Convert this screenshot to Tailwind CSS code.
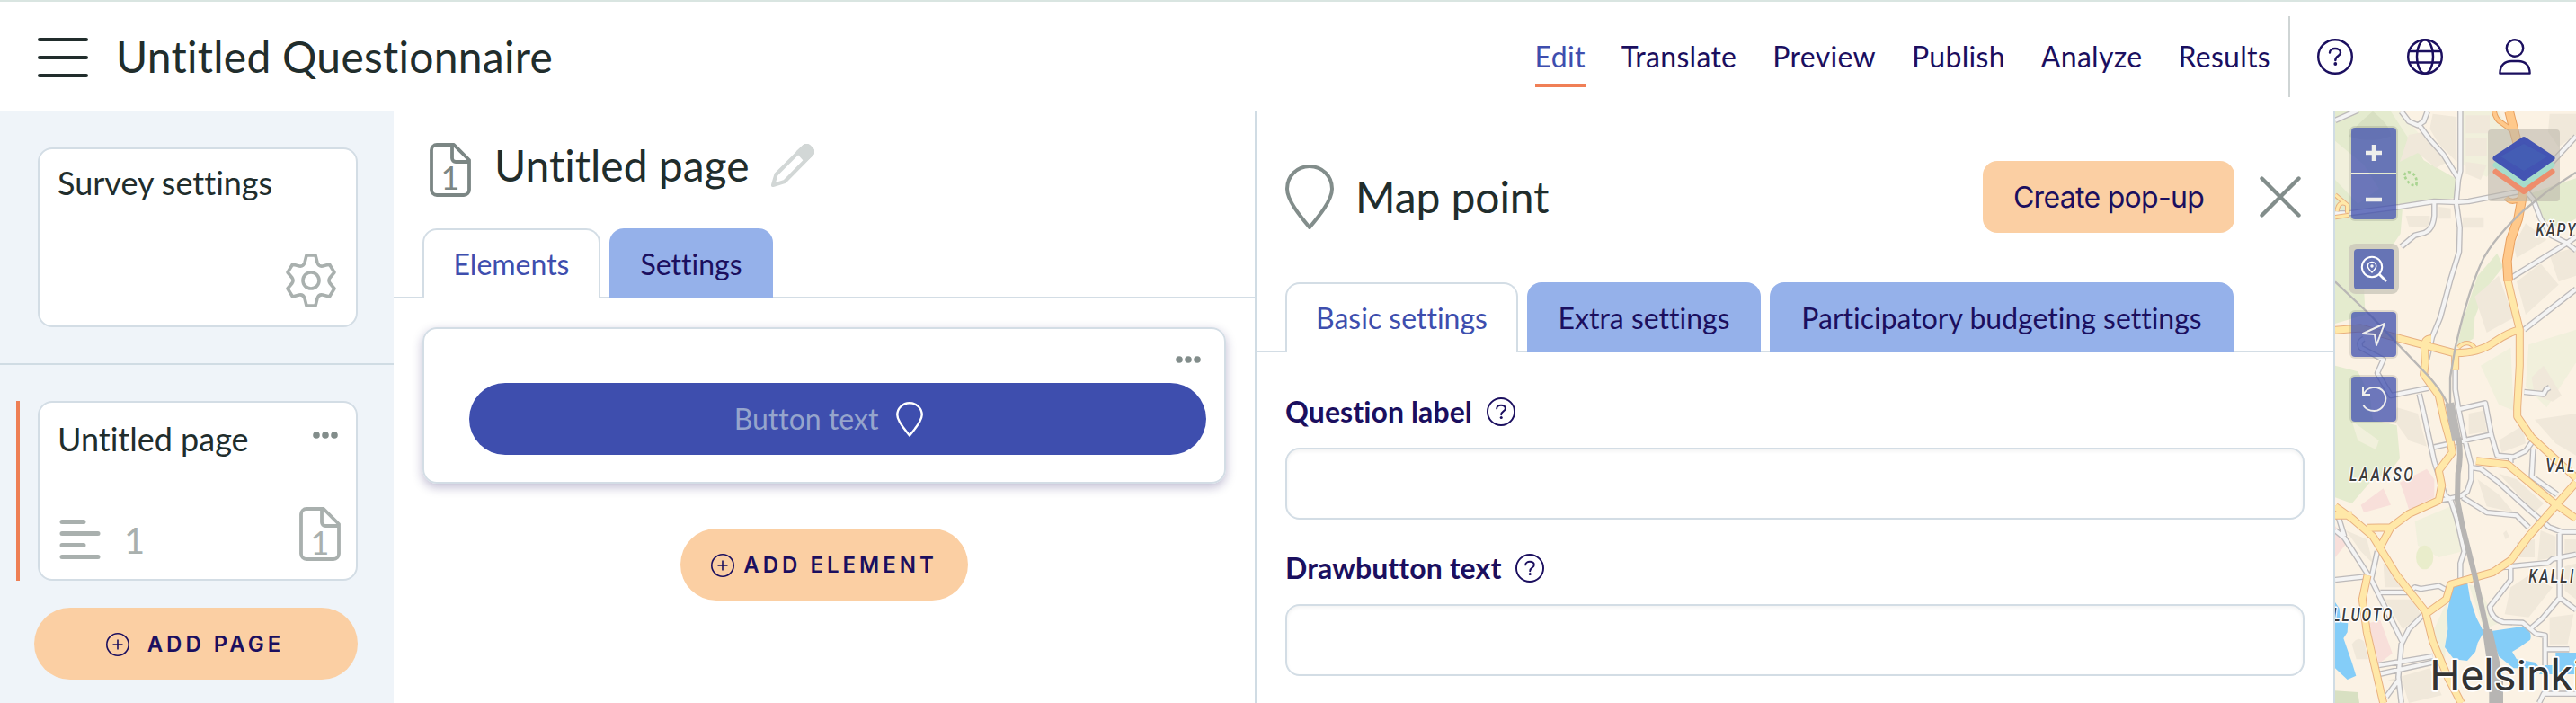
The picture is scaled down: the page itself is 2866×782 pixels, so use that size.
<!DOCTYPE html>
<html lang="en">
  <head>
    <meta charset="UTF-8" />
    <meta name="viewport" content="width=device-width, initial-scale=1.0" />
    <title>Untitled Questionnaire</title>
    <script src="https://cdn.jsdelivr.net/npm/@tailwindcss/browser@4"></script>
  </head>
  <body class="h-[782px] flex flex-col overflow-hidden bg-white font-[Lato,sans-serif] [font-variant-ligatures:none] text-[32px] leading-10 text-[#1b0f5f]">

    <!-- shared icons -->
    <svg class="hidden">
      <symbol id="file" viewBox="0 0 46 60">
        <path d="M8 2H27L44 19V52a6 6 0 0 1-6 6H8a6 6 0 0 1-6-6V8a6 6 0 0 1 6-6ZM25 2V17a4 4 0 0 0 4 4H44" fill="none" stroke="currentColor" stroke-width="3.8" stroke-linejoin="round"/>
      </symbol>
      <symbol id="pin" viewBox="0 0 54 72">
        <path d="M27 2C13 2 2 13 2 27C2 40 17 58 27 70C37 58 52 40 52 27C52 13 41 2 27 2Z" fill="none" stroke="currentColor" stroke-width="4" stroke-linejoin="round"/>
      </symbol>
      <symbol id="help" viewBox="0 0 40 40">
        <circle cx="20" cy="20" r="18.8" fill="none" stroke="currentColor" stroke-width="2.4"/>
        <path d="M14 15.5C14 9.5 26 9.5 26 15.5C26 19.5 20.3 19 20.3 24" fill="none" stroke="currentColor" stroke-width="2.4" stroke-linecap="round"/>
        <circle cx="20.3" cy="28" r="1.9" fill="currentColor"/>
      </symbol>
      <symbol id="plus" viewBox="0 0 26 26">
        <path d="M13 7.5V18.5M7.5 13H18.5" stroke="currentColor" stroke-width="1.6"/>
        <circle cx="13" cy="13" r="12.2" fill="none" stroke="currentColor" stroke-width="1.6"/>
      </symbol>
      <symbol id="dots" viewBox="0 0 28 8">
        <circle cx="4" cy="4" r="3.8" fill="currentColor"/><circle cx="14" cy="4" r="3.8" fill="currentColor"/><circle cx="24" cy="4" r="3.8" fill="currentColor"/>
      </symbol>
    </svg>

    <header class="h-[124px] shrink-0 flex items-center border-t-2 border-[#d9e5e1] pl-[42px]">
      <svg class="w-14 h-10 mt-0.5 overflow-visible" viewBox="0 0 56 40"><path d="M2 0H54M2 20H54M2 40H54" stroke="#212d2c" stroke-width="4" stroke-linecap="round"/></svg>
      <h1 class="ml-[31px] text-5xl tracking-[0.25px] text-[#212d2c]">Untitled Questionnaire</h1>
      <nav class="ml-auto flex h-full items-center gap-10 tracking-[0.3px]">
        <a class="relative text-[#3e4eae]">Edit<span class="absolute left-0 -bottom-3.5 w-full h-1 bg-[#f07f56]"></span></a>
        <a>Translate</a>
        <a>Preview</a>
        <a>Publish</a>
        <a>Analyze</a>
        <a>Results</a>
      </nav>
      <div class="ml-5 w-0.5 h-[90px] bg-[#cfd5d5]"></div>
      <div class="flex items-center pl-[30px] pr-[50px] gap-[60px]">
        <svg class="size-10"><use href="#help"/></svg>
        <svg class="size-10" viewBox="0 0 40 40" fill="none" stroke="currentColor" stroke-width="2.4"><circle cx="20" cy="20" r="18.8"/><ellipse cx="20" cy="20" rx="9" ry="18.8"/><path d="M2.5 14H37.5M2.5 26.5H37.5"/></svg>
        <svg class="w-9 h-10 ml-0.5" viewBox="0 0 36 40" fill="none" stroke="currentColor" stroke-width="2.4" stroke-linejoin="round"><ellipse cx="18" cy="10.5" rx="9.2" ry="9.2"/><path d="M1.4 38.6C1.4 29.5 7 25 14 25H22C29 25 34.6 29.5 34.6 38.6Z"/></svg>
      </div>
    </header>

    <div class="flex flex-1 min-h-0">

      <!-- page list -->
      <aside class="w-[438px] shrink-0 bg-[#eff4f9]">
        <div class="h-[282px] pt-10 pl-[42px] border-b-2 border-[#d0dce4]">
          <div class="w-[356px] h-[200px] flex flex-col justify-between rounded-2xl border-2 border-[#d3dde5] bg-white pt-[17px] pl-5 pr-[22px] pb-5">
            <h2 class="text-4xl text-[#212d2c]">Survey settings</h2>
            <svg class="w-[56px] h-[60px] self-end text-[#a9b0ae]" viewBox="0 0 56 60" fill="none" stroke="currentColor" stroke-width="3.6" stroke-linejoin="round"><path d="M23 2H33L35 10C36 13 38 14.500 41 14L48.500 12L54 21L49 27Q47 30 49 33L54 39L48.500 48L41 46C38 45.500 36 47 35 50L33 58H23L21 50C20 47 18 45.500 15 46L7.500 48L2 39L7 33Q9 30 7 27L2 21L7.500 12L15 14C18 14.500 20 13 21 10Z"/><circle cx="28" cy="30" r="9"/></svg>
          </div>
        </div>
        <div class="flex mt-10 pl-[18px]">
          <div class="w-1 h-[200px] bg-[#ee7f55]"></div>
          <div class="ml-5 w-[356px] h-[200px] flex flex-col justify-between rounded-2xl border-2 border-[#d3dde5] bg-white pt-5 pl-5 pr-4 pb-5">
            <div class="flex justify-between">
              <h2 class="text-4xl text-[#212d2c]">Untitled page</h2>
              <svg class="w-7 h-2 mt-3 mr-1 text-[#828d8b]"><use href="#dots"/></svg>
            </div>
            <div class="flex items-end pl-px pr-px text-[#a9b0ae]">
              <svg class="w-[47px] h-11 mb-0.5" viewBox="0 0 47 44"><path d="M4 2.500H28M4 15.500H44M4 28.500H28M4 41.500H44" stroke="currentColor" stroke-width="5" stroke-linecap="round"/></svg>
              <span class="ml-[26px] mb-[-1px] text-[40px] leading-[48px]">1</span>
              <div class="relative ml-auto w-[46px] h-[60px]">
                <svg class="w-full h-full"><use href="#file"/></svg>
                <span class="absolute left-0 top-[19px] w-full text-center text-4xl">1</span>
              </div>
            </div>
          </div>
        </div>
        <button class="ml-[38px] mt-[30px] w-[360px] h-20 flex items-center justify-center gap-5 rounded-full bg-[#fbcfa3] pt-0.5 pr-0.5 font-[Inter,sans-serif] font-semibold text-2xl tracking-[4px]">
          <svg class="size-[26px]"><use href="#plus"/></svg>
          <span>ADD PAGE</span>
        </button>
      </aside>

      <!-- page editor -->
      <main class="w-[960px] shrink-0 border-r-2 border-[#d0dce4]">
        <div class="flex h-[130px] items-center pl-10">
          <div class="relative w-[46px] h-[60px] text-[#7b8684]">
            <svg class="w-full h-full"><use href="#file"/></svg>
            <span class="absolute left-0 top-[18px] w-full text-center text-4xl">1</span>
          </div>
          <h2 class="ml-[26px] mb-2.5 text-5xl text-[#212d2c]">Untitled page</h2>
          <svg class="ml-6 mb-2.5 size-12" viewBox="0 0 48 48" fill="none" stroke="#d2d7d6" stroke-width="4.2" stroke-linejoin="round"><path d="M2 46L5.500 34L36 3.500C38 1.500 40 1.500 42 3L45 6C46.500 8 46.500 10 44.500 12L15 42Z"/><path d="M30 9L36 3.500C38 1.500 40 1.500 42 3L45 6C46.500 8 46.500 10 44.500 12L38 18Z" fill="#d2d7d6"/></svg>
        </div>
        <div class="flex h-[78px]">
          <div class="w-8 border-b-2 border-[#d3dde5]"></div>
          <div class="w-[198px] flex items-center justify-center rounded-t-2xl border-2 border-b-0 border-[#d3dde5] text-[#3e4eae]">Elements</div>
          <div class="w-2.5 border-b-2 border-[#d3dde5]"></div>
          <div class="w-[182px] flex items-center justify-center rounded-t-2xl bg-[#95b1ea] pt-px">Settings</div>
          <div class="flex-1 border-b-2 border-[#d3dde5]"></div>
        </div>
        <section class="ml-8 mt-8 w-[894px] h-[174px] flex flex-col rounded-2xl border-2 border-[#d3dde5] pl-[50px] pr-5 shadow-[0_4px_12px_rgba(27,15,95,0.28)]">
          <svg class="w-7 h-2 mt-[30px] mr-[6px] self-end text-[#828d8b]"><use href="#dots"/></svg>
          <div class="mt-[22px] h-20 flex items-center justify-center gap-5 rounded-full bg-[#3e4eae] pr-5 text-[#96a5cc]">
            <span>Button text</span>
            <svg class="w-[30px] h-[39px] text-white" viewBox="0 0 30 39"><path d="M15 1.300C7 1.300 1.300 7.500 1.300 14.500C1.300 22 10 31 15 37.500C20 31 28.700 22 28.700 14.500C28.700 7.500 23 1.300 15 1.300Z" fill="none" stroke="currentColor" stroke-width="2.400" stroke-linejoin="round"/></svg>
          </div>
        </section>
        <button class="ml-[319px] mt-[50px] w-[320px] h-20 flex items-center justify-center gap-2.5 rounded-full bg-[#fbcfa3] pt-0.5 font-[Inter,sans-serif] font-semibold text-2xl tracking-[4px]">
          <svg class="size-[26px]"><use href="#plus"/></svg>
          <span>ADD ELEMENT</span>
        </button>
      </main>

      <!-- question settings -->
      <section class="w-[1200px] shrink-0 border-r-2 border-[#d0dce4]">
        <div class="flex items-center h-[190px] pl-8 pr-[36px]">
          <svg class="w-[54px] h-[72px] text-[#828d8b]"><use href="#pin"/></svg>
          <h2 class="ml-6 text-5xl tracking-[-0.1px] text-[#212d2c]">Map point</h2>
          <button class="ml-auto w-[280px] h-20 rounded-2xl bg-[#fbcfa3] pt-0.5 font-[Inter,sans-serif] text-[32px] tracking-[-0.7px]">Create pop-up</button>
          <svg class="ml-7 w-[46px] h-[46px]" viewBox="0 0 46 46"><path d="M2.500 2.500L43.500 43.500M43.500 2.500L2.500 43.500" stroke="#828d8b" stroke-width="4.400" stroke-linecap="round"/></svg>
        </div>
        <div class="flex h-[78px]">
          <div class="w-8 border-b-2 border-[#d3dde5]"></div>
          <div class="w-[259px] flex items-center justify-center rounded-t-2xl border-2 border-b-0 border-[#d3dde5] text-[#3e4eae]">Basic settings</div>
          <div class="w-2.5 border-b-2 border-[#d3dde5]"></div>
          <div class="w-[260px] flex items-center justify-center rounded-t-2xl bg-[#95b1ea] pt-px">Extra settings</div>
          <div class="w-2.5 border-b-2 border-[#d3dde5]"></div>
          <div class="w-[516px] flex items-center justify-center rounded-t-2xl bg-[#95b1ea] pt-px">Participatory budgeting settings</div>
          <div class="flex-1 border-b-2 border-[#d3dde5]"></div>
        </div>
        <form class="pl-8 pr-8 pt-[46px]">
          <label class="flex items-center gap-4 font-bold tracking-[0.1px]">Question label <svg class="size-8"><use href="#help"/></svg></label>
          <input class="mt-5 block w-full h-20 rounded-2xl border-2 border-[#d3dde5] shadow-[inset_0_2px_4px_rgba(0,0,0,0.05)]" />
          <label class="mt-[34px] flex items-center gap-4 font-bold tracking-[0.1px]">Drawbutton text <svg class="size-8"><use href="#help"/></svg></label>
          <input class="mt-5 block w-full h-20 rounded-2xl border-2 border-[#d3dde5] shadow-[inset_0_2px_4px_rgba(0,0,0,0.05)]" />
        </form>
      </section>

      <!-- map -->
      <section class="relative flex-1 overflow-hidden bg-[#fbf2e4]">
        <svg class="w-[268px] h-[658px]" viewBox="54 12 804 1974" fill="none" stroke-linejoin="round">
          <defs>
            <path id="streets" d="M472 12V210L465 240L458 315L470 400L468 480L440 570L405 700L378 765L360 840M275 12L300 45L330 58L350 45L362 12M335 58L370 105L415 155L465 235M54 352H100L270 330L385 312L460 315L500 312L690 275M690 275L715 305L740 370L775 425L825 450L858 475M385 315V360Q380 415 340 420L320 425L275 463M54 42L130 8M858 95L780 180L700 270M645 565L830 450L858 430M685 740L858 605M150 770Q130 780 140 800L215 840L195 885L240 960L365 935M335 955L350 1020L385 1180L420 1290L440 1310M455 875V940L465 1000L485 1100L508 1190V1240L495 1280L475 1295L405 1310M470 1005L555 985L575 1090L595 1160L650 1165L690 1145L715 1110M385 1132L575 1090M640 1165V1185M510 1200L540 1205L600 1250L700 1340L770 1400L810 1415H858M480 1300L560 1350L660 1360L700 1400M440 1310L460 1370L485 1480L472 1520V1570M590 1535L765 1518L780 1505L858 1490M640 1520V1575L570 1665Q575 1705 615 1716L680 1718L725 1755L755 1760V1860M803 1415V1635L745 1705L710 1735M805 1635L858 1675M54 1410L85 1435L175 1575L280 1785M65 1365L85 1430M195 1480L175 1570M54 1575L165 1563M205 1617H300L320 1600L340 1605L400 1595L430 1612M350 1690L300 1740L275 1790L265 1900L275 1986M200 1860L380 1830M200 1890L380 1850M265 1910L225 1965M715 1140L710 1230L795 1290M755 1807H835M858 1955H750L735 1986M685 948L750 955L758 940L770 933"/>
            <path id="roads" d="M54 742L140 735L290 775L450 818Q530 820 580 785T670 740M630 575L650 660L670 740V860L662 1000V1030L710 1100L858 1235M375 770Q350 770 352 800L355 850L350 890L400 960L420 1050L440 1120L445 1150L400 1210L410 1260L400 1310L300 1355L240 1400L205 1465M54 1330L110 1370L180 1430L260 1560L355 1680L380 1780L430 1900L475 1986M54 1360H110M160 1402L240 1400M355 1690L425 1640L440 1590L580 1550L640 1510L700 1430L858 1250M525 1178L630 1190L780 1315L858 1370M162 1560L145 1640L160 1750L215 1986M455 825V875"/>
            <path id="ramps" d="M465 800Q495 770 520 800M54 290L95 325L95 350M60 345Q65 310 90 320M54 365L100 358"/>
            <path id="highway" d="M635 12L655 90L685 200L680 290L665 370L640 440L628 510L632 578"/>
            <path id="exits" d="M585 12Q590 40 610 50L645 75M625 300Q640 320 670 305L690 280"/>
          </defs>
          <!-- parks -->
          <g fill="#e4ebce">
            <path d="M54 12H270L300 90L350 175L455 235L460 300L280 322L272 420L150 600L155 690L54 720Z"/>
            <path d="M54 860L130 880L170 960L180 1040L260 1060L270 1170L240 1210L170 1250L110 1320L54 1300Z"/>
            <path d="M690 290L858 235V370L800 400L740 365Z"/>
            <path d="M595 485L615 530L560 600L520 700L515 770L460 800L480 710L530 560Z"/>
          </g>
          <g fill="#f1f0dc">
            <path d="M54 110L150 190L200 270L130 320L54 240Z"/>
            <path d="M240 12H275L310 60L430 190L330 150Z"/>
            <path d="M480 12H600L660 120L560 230L480 190Z"/>
            <path d="M540 860L640 800L650 1010L600 990Z"/>
            <path d="M700 790L858 740V850L760 1000L690 930Z"/>
            <path d="M320 1380L440 1330L480 1480L400 1500L330 1460Z"/>
            <path d="M430 1640L420 1850L380 1750ZM500 1590L530 1600L600 1720L550 1740Z"/>
            <path d="M110 1045L200 1110L190 1140L130 1110Z"/>
          </g>
          <ellipse cx="353" cy="1500" rx="29" ry="40" fill="#e9edcb"/>
          <path d="M100 95Q120 60 180 12Q240 60 240 95Q170 120 100 95ZM54 1945L130 1950L135 1986H54Z" fill="#d8e0c2"/>
          <!-- built-up blocks -->
          <g fill="#f0e8da">
            <path d="M300 90L350 80L430 180L390 200L330 150L270 180ZM380 20L460 30V180L400 120L370 70Z"/>
            <path d="M490 25H570V85H490ZM490 100H560V160H490ZM490 180L560 190L540 240L490 220Z"/>
            <path d="M290 360H370V400L300 395ZM480 365H550V400H480ZM400 330L440 335V370H400Z"/>
            <path d="M690 385L760 440L660 500L650 460ZM770 20H858V90L800 130L765 80Z"/>
            <path d="M520 630L600 560L650 700L560 750ZM660 580L740 520L800 590L690 690Z"/>
            <path d="M770 490L858 465V560L800 580ZM710 900L750 860L810 960L780 980L720 960Z"/>
            <path d="M260 1000L330 1020L360 1130L300 1110L250 1040ZM500 1020L550 1010L560 1080L500 1090Z"/>
            <path d="M720 1040L858 1020V1160L790 1120ZM600 1110L680 1060L690 1120L610 1150Z"/>
            <path d="M530 1240L600 1290L650 1350L560 1330ZM730 1230L780 1270L760 1300L720 1270Z"/>
            <path d="M600 1220L660 1240L750 1320L720 1350ZM660 1450L720 1440V1500H660Z"/>
            <path d="M740 1410L790 1430V1500L730 1510ZM820 1440H858V1490L820 1495ZM820 1530L858 1520V1640L820 1610Z"/>
            <path d="M90 1410L160 1440L180 1520L140 1480ZM215 1520L240 1540L280 1600L220 1600ZM220 1640H310L340 1690L280 1740Z"/>
            <path d="M640 1600L700 1560L780 1600L700 1700L620 1690ZM110 1790Q130 1760 150 1780L165 1840H125Z"/>
            <path d="M230 1910L370 1870L410 1960L300 1986L280 1920ZM770 1700L850 1690L830 1790H770ZM615 1420l10-10 10 20-12 10Z"/>
          </g>
          <path d="M270 1250L360 1205L385 1240V1300L300 1340L285 1290ZM140 1325L215 1270L240 1325L150 1350ZM54 1395L95 1450L54 1500ZM165 1720L205 1710L245 1820L200 1855Z" fill="#f8dfda"/>
          <!-- water -->
          <path d="M450 1585L495 1582L505 1640L525 1700L550 1750L530 1785L522 1815L495 1845L450 1840L420 1800L430 1740L428 1680ZM550 1750L680 1731Q715 1745 705 1775L670 1800L645 1815L660 1840L720 1850L740 1870L650 1870L600 1830L580 1770ZM790 1818H858V1890H735L755 1860H790ZM54 1650L68 1670L72 1715L97 1720L95 1750L82 1770L110 1850L124 1895L95 1908L54 1870Z" fill="#84cdf8"/>
          <!-- streets, casing first -->
          <use href="#streets" stroke="#bdbaba" stroke-width="20"/>
          <use href="#streets" stroke="#f4f4f4" stroke-width="12"/>
          <use href="#roads" stroke="#e8b080" stroke-width="27"/>
          <use href="#ramps" stroke="#e8b080" stroke-width="16"/>
          <use href="#roads" stroke="#ffe8a8" stroke-width="21"/>
          <use href="#ramps" stroke="#ffe8a8" stroke-width="10"/>
          <use href="#exits" stroke="#e8a060" stroke-width="18"/>
          <use href="#highway" stroke="#e8a060" stroke-width="32"/>
          <use href="#exits" stroke="#ffc98b" stroke-width="12"/>
          <use href="#highway" stroke="#ffc98b" stroke-width="26"/>
          <!-- railway -->
          <path d="M858 215L760 280L680 345Q590 430 550 500Q500 600 455 800L438 900V1000M54 580L170 690L260 785L370 900Q430 970 440 1020" stroke="#b9b7b5" stroke-width="7"/>
          <path d="M436 985L460 1110" stroke="#bab8b6" stroke-width="30"/>
          <path d="M466 1100Q476 1160 464 1220L462 1310L480 1400L520 1560L560 1740L590 1900" stroke="#b7b5b3" stroke-width="18"/>
          <path d="M545 1740L578 1740L615 1900V1986H568V1900Z" fill="#b7b5b3"/>
          <path d="M285 225Q290 210 305 215Q330 225 325 258Q300 262 285 225Z" stroke="#a9d491" stroke-width="8" stroke-dasharray="9 8"/>
          <!-- place names -->
          <g fill="#3c3c3c" stroke="#fff" stroke-width="9" paint-order="stroke" font-family="Roboto, sans-serif" font-style="italic" font-weight="500" font-size="61">
            <text transform="translate(724 430) scale(.78 1)" textLength="169">KÄPY</text>
            <text transform="translate(102 1245) scale(.78 1)" textLength="273">LAAKSO</text>
            <text transform="translate(757 1215) scale(.78 1)" textLength="123">VAL</text>
            <text transform="translate(700 1585) scale(.78 1)" textLength="192">KALLI</text>
            <text transform="translate(46 1713) scale(.78 1)" textLength="254">LLUOTO</text>
          </g>
          <text x="370" y="1943" fill="#333" stroke="#fff" stroke-width="10" paint-order="stroke" font-family="Roboto, sans-serif" font-size="144">Helsinki</text>
        </svg>

        <!-- map controls -->
        <div class="absolute left-[15px] top-[18px] w-14 flex flex-col items-center text-[#eeeeec]">
          <div class="flex flex-col gap-0.5 rounded ring-2 ring-black/10">
            <svg class="w-[50px] h-[50px] rounded-t bg-[#3e4eae]/75" viewBox="0 0 50 50"><path d="M25 19V37M16 28H34" stroke="currentColor" stroke-width="4.500"/></svg>
            <svg class="w-[50px] h-[50px] rounded-b bg-[#3e4eae]/75" viewBox="0 0 50 50"><path d="M16 28H34" stroke="currentColor" stroke-width="4.500"/></svg>
          </div>
          <div class="mt-[27px] size-14 flex items-center justify-center rounded-lg bg-[#cbc7ba]/80">
            <svg class="w-[45px] h-[45px] rounded bg-[#6674b5]" viewBox="0 0 45 45" fill="none" stroke="#fff" stroke-width="2"><circle cx="20" cy="20" r="11.200"/><path d="M28 28L36 36" stroke-width="2.600"/><path d="M20 14.500C17 14.500 15.300 16.700 15.300 19C15.300 21.500 18 24 20 26C22 24 24.700 21.500 24.700 19C24.700 16.700 23 14.500 20 14.500Z" stroke-width="1.500"/><circle cx="20" cy="19" r="1" stroke-width="1.400"/></svg>
          </div>
          <svg class="mt-5 size-[50px] rounded bg-[#3e4eae]/75 ring-2 ring-black/10" viewBox="0 0 50 50" fill="none" stroke="currentColor" stroke-width="2" stroke-linejoin="round"><path d="M37 13L13 24L26 25L28 37Z"/></svg>
          <svg class="mt-[22px] size-[50px] rounded bg-[#3e4eae]/75 ring-2 ring-black/10" viewBox="0 0 50 50" fill="none" stroke="currentColor" stroke-width="2"><path d="M13 12V20H21M13.500 20C17 11 30 9 36 17C42 26 35 38 25.500 38C20 38 16 36 13.500 32"/></svg>
        </div>
        <svg class="absolute left-[170px] top-5 size-20 rounded bg-[#b8b3a8]/55" viewBox="0 0 80 80" stroke-linejoin="round" stroke-width="6">
          <path d="M8.500 47L40 27L71.500 47L40 69Z" fill="#ee8d6c" stroke="#ee8d6c"/>
          <path d="M8.500 39.500L40 20L71.500 39.500L40 61.500Z" fill="#a6dccb" stroke="#a6dccb"/>
          <path d="M8.500 32L40 11L71.500 32L40 54Z" fill="#4354b3" stroke="#4354b3"/>
          <path d="M14 30L40 16L66 30L40 46Z" fill="#4770b8" opacity=".35"/>
        </svg>
      </section>
    </div>
  </body>
</html>
